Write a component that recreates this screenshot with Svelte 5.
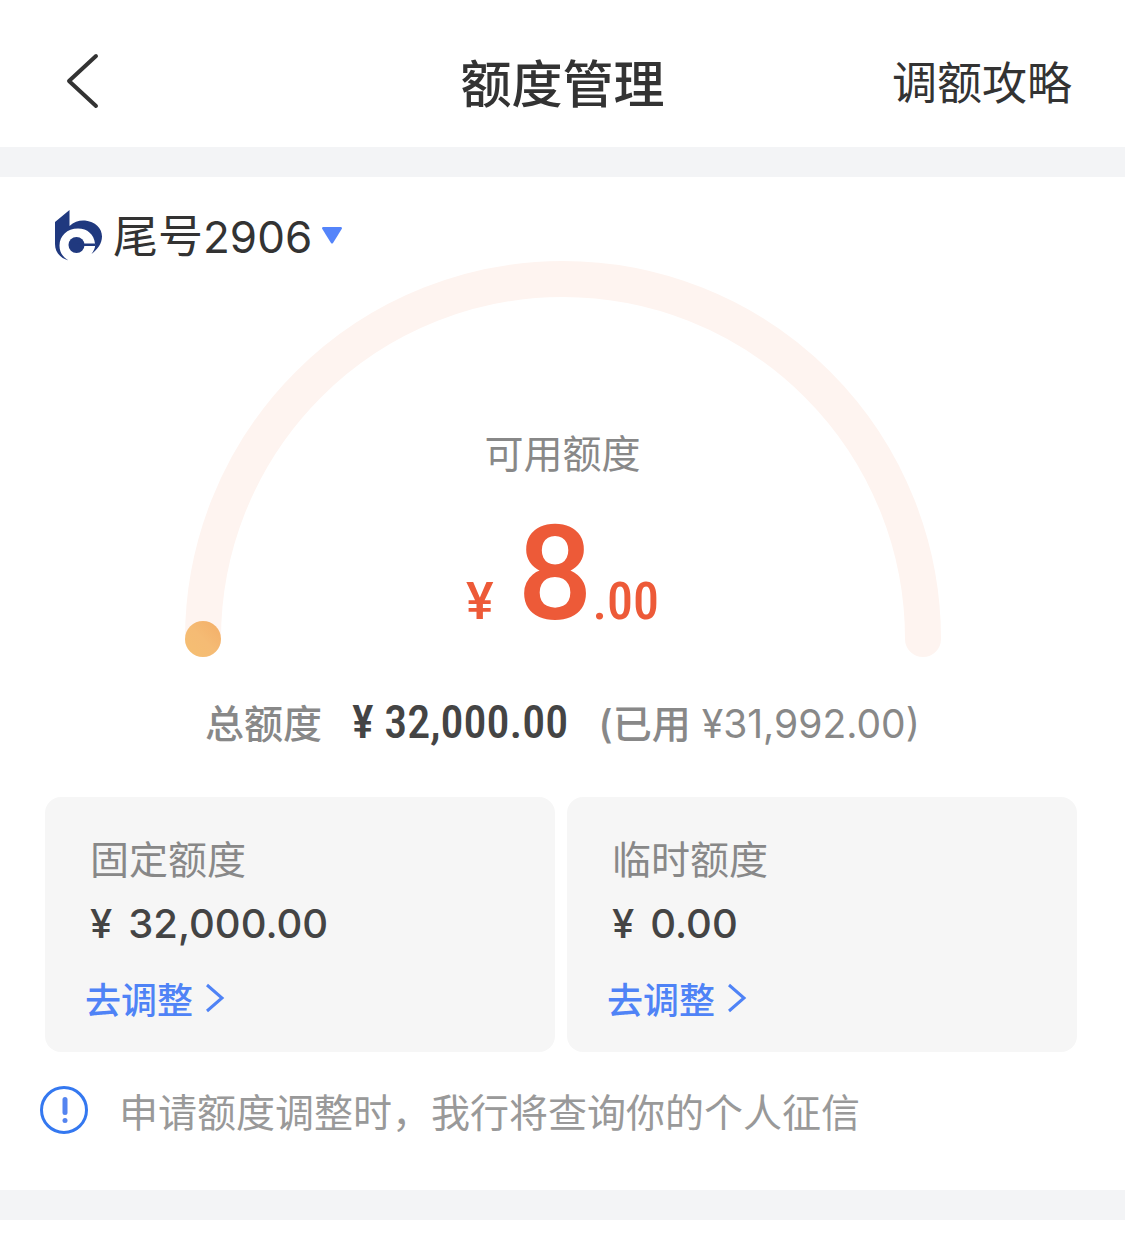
<script>
  const cardTail = '2906';
  const available = { whole: '8', cents: '.00' };
  const total = '32,000.00';
  const used = '31,992.00';

  const limits = [
    { name: '固定额度', amount: '32,000.00' },
    { name: '临时额度', amount: '0.00' }
  ];
</script>

<header>
  <button class="back" aria-label="返回">
    <svg width="34" height="56" viewBox="0 0 34 56">
      <path d="M31 3 4 28l27 25" />
    </svg>
  </button>
  <h1>额度管理</h1>
  <a class="guide" href="#guide">调额攻略</a>
</header>

<main>
  <button class="picker">
    <svg class="logo" width="48" height="52" viewBox="0 0 48 52">
      <path d="M0 12 14.500 0v16C19 11.500 25 10 30 10.500 40 11.500 47 18 47 26.500c0 7-4.500 13-10.500 17.500 3-4.500 4-7 3.500-10.500C39 24.500 32.500 18.500 23 18.500 12 18.500 4.500 26 4.500 35.500c0 6.500 3 11.500 9 15C5 48 0 42 0 34z" />
      <circle cx="21.500" cy="35" r="8" />
      <path d="M22 33.500h18v2.500H22z" />
    </svg>
    <span>尾号<span class="digits">{cardTail}</span></span>
    <svg class="caret" width="20" height="17" viewBox="0 0 20 17">
      <path d="M1 0h18q1.500.5.700 2L11 16q-1 1.200-2 0L.3 2Q-.5.500 1 0z" />
    </svg>
  </button>

  <section class="gauge">
    <svg class="arc" viewBox="0 0 756 396">
      <defs>
        <linearGradient id="knob" x1="1" y1="0" x2="0" y2="1">
          <stop offset="0" stop-color="#f3ae68" />
          <stop offset="0.5" stop-color="#f5bb74" />
          <stop offset="1" stop-color="#f5bf72" />
        </linearGradient>
      </defs>
      <path d="M18 378a360 360 0 0 1 720 0" />
      <circle cx="18" cy="378" r="18" fill="url(#knob)" />
    </svg>
    <div class="reading">
      <p class="label">可用额度</p>
      <p class="available">
        <span class="yen">¥</span>
        <strong>{available.whole}</strong>
        <span class="cents">{available.cents}</span>
      </p>
    </div>
  </section>

  <p class="total">
    <span class="total-name">总额度</span>
    <strong>¥ {total}</strong>
    <span class="used"><span class="used-name">(已用</span> ¥{used})</span>
  </p>

  <div class="limits">
    {#each limits as limit}
      <section class="limit">
        <h2>{limit.name}</h2>
        <p class="amount"><span>¥</span>{limit.amount}</p>
        <a href="#adjust">
          去调整
          <svg width="20" height="30" viewBox="0 0 20 30">
            <path d="M2 2l15 13L2 28" />
          </svg>
        </a>
      </section>
    {/each}
  </div>

  <p class="notice">
    <svg width="48" height="48" viewBox="0 0 48 48">
      <circle cx="24" cy="24" r="22.500" />
      <path d="M25 13.500v13" />
      <path d="M25 34.500v.1" />
    </svg>
    申请额度调整时，我行将查询你的个人征信
  </p>
</main>

<style>
  :global(body) {
    margin: 0;
    background: #fff;
    color: #333;
    font-family: 'Noto Sans CJK SC', sans-serif;
  }

  h1,
  h2,
  p {
    margin: 0;
    font-weight: 400;
  }

  button {
    padding: 0;
    border: none;
    background: none;
    color: inherit;
    font: inherit;
    cursor: pointer;
  }

  a {
    color: inherit;
    text-decoration: none;
  }

  svg {
    flex: none;
    display: block;
  }

  header {
    display: grid;
    grid-template-columns: 1fr auto 1fr;
    align-items: center;
    padding: 41px 53px 26px;
  }

  .back {
    justify-self: start;
    margin-left: 12px;
  }

  .back path {
    fill: none;
    stroke: #333;
    stroke-width: 4;
    stroke-linecap: round;
    stroke-linejoin: round;
  }

  h1 {
    font-size: 51px;
    font-weight: 500;
    line-height: 80px;
  }

  .guide {
    justify-self: end;
    font-size: 45px;
    line-height: 80px;
  }

  main {
    border: solid #f3f4f6;
    border-width: 30px 0;
    padding: 25px 48px 50px 40px;
  }

  .picker {
    display: flex;
    align-items: center;
    gap: 10px;
    margin-left: 15px;
    font-size: 45px;
    line-height: 64px;
  }

  .digits {
    font-family: Inter, sans-serif;
    font-size: 44px;
  }

  .logo {
    fill: #20397f;
  }

  .caret {
    fill: #5484fa;
  }

  .gauge {
    display: grid;
    justify-items: center;
    margin-top: -8px;
    margin-right: -8px;
  }

  .arc,
  .reading {
    grid-area: 1 / 1;
  }

  .arc {
    width: 100%;
    max-width: 756px;
  }

  .arc path {
    fill: none;
    stroke: #fef4f0;
    stroke-width: 36;
    stroke-linecap: round;
  }

  .reading {
    padding-top: 160px;
    text-align: center;
  }

  .label {
    color: #888;
    font-size: 39px;
    line-height: 60px;
  }

  .available {
    display: flex;
    justify-content: center;
    align-items: baseline;
    margin-top: 23px;
    color: #ed5a38;
    font-family: 'Roboto Condensed', Roboto, sans-serif;
    font-size: 52px;
    font-weight: 500;
    line-height: 140px;
  }

  .available .yen {
    margin-right: 24px;
    font-family: Roboto, sans-serif;
  }

  .available strong {
    font-family: Roboto, sans-serif;
    font-size: 132px;
    font-weight: 500;
  }

  .total {
    display: flex;
    justify-content: center;
    align-items: baseline;
    gap: 30px;
    margin-top: 19px;
    margin-right: -8px;
    color: #888;
    font-size: 39px;
    line-height: 60px;
  }

  .total-name,
  .used-name {
    font-weight: 500;
  }

  .total strong {
    color: #444;
    font-family: 'Roboto Condensed', Roboto, sans-serif;
    font-size: 46px;
    font-weight: 500;
  }

  .used {
    font-family: Inter, 'Noto Sans CJK SC', sans-serif;
  }

  .limits {
    display: grid;
    grid-template-columns: 1fr 1fr;
    gap: 12px;
    margin: 43px 0 0 5px;
  }

  .limit {
    padding: 30px 40px 17px 45px;
    border-radius: 16px;
    background: #f6f6f6;
  }

  h2 {
    color: #888;
    font-size: 39px;
    line-height: 60px;
  }

  .amount {
    color: #444;
    font-family: Inter, sans-serif;
    font-size: 40px;
    font-weight: 500;
    line-height: 74px;
  }

  .amount span {
    margin-right: 16px;
  }

  .limit a {
    display: flex;
    align-items: center;
    gap: 12px;
    width: fit-content;
    margin-left: -5px;
    color: #4f83f6;
    font-size: 36px;
    font-weight: 500;
    line-height: 74px;
  }

  .limit a path {
    fill: none;
    stroke: #4f83f6;
    stroke-width: 3;
  }

  .notice {
    display: flex;
    align-items: center;
    gap: 31px;
    margin-top: 28px;
    color: #999;
    font-size: 39px;
    line-height: 60px;
  }

  .notice svg {
    fill: none;
    stroke: #3478f0;
    stroke-width: 3;
  }

  .notice path {
    stroke: #5484f0;
    stroke-width: 5;
    stroke-linecap: round;
  }
</style>
